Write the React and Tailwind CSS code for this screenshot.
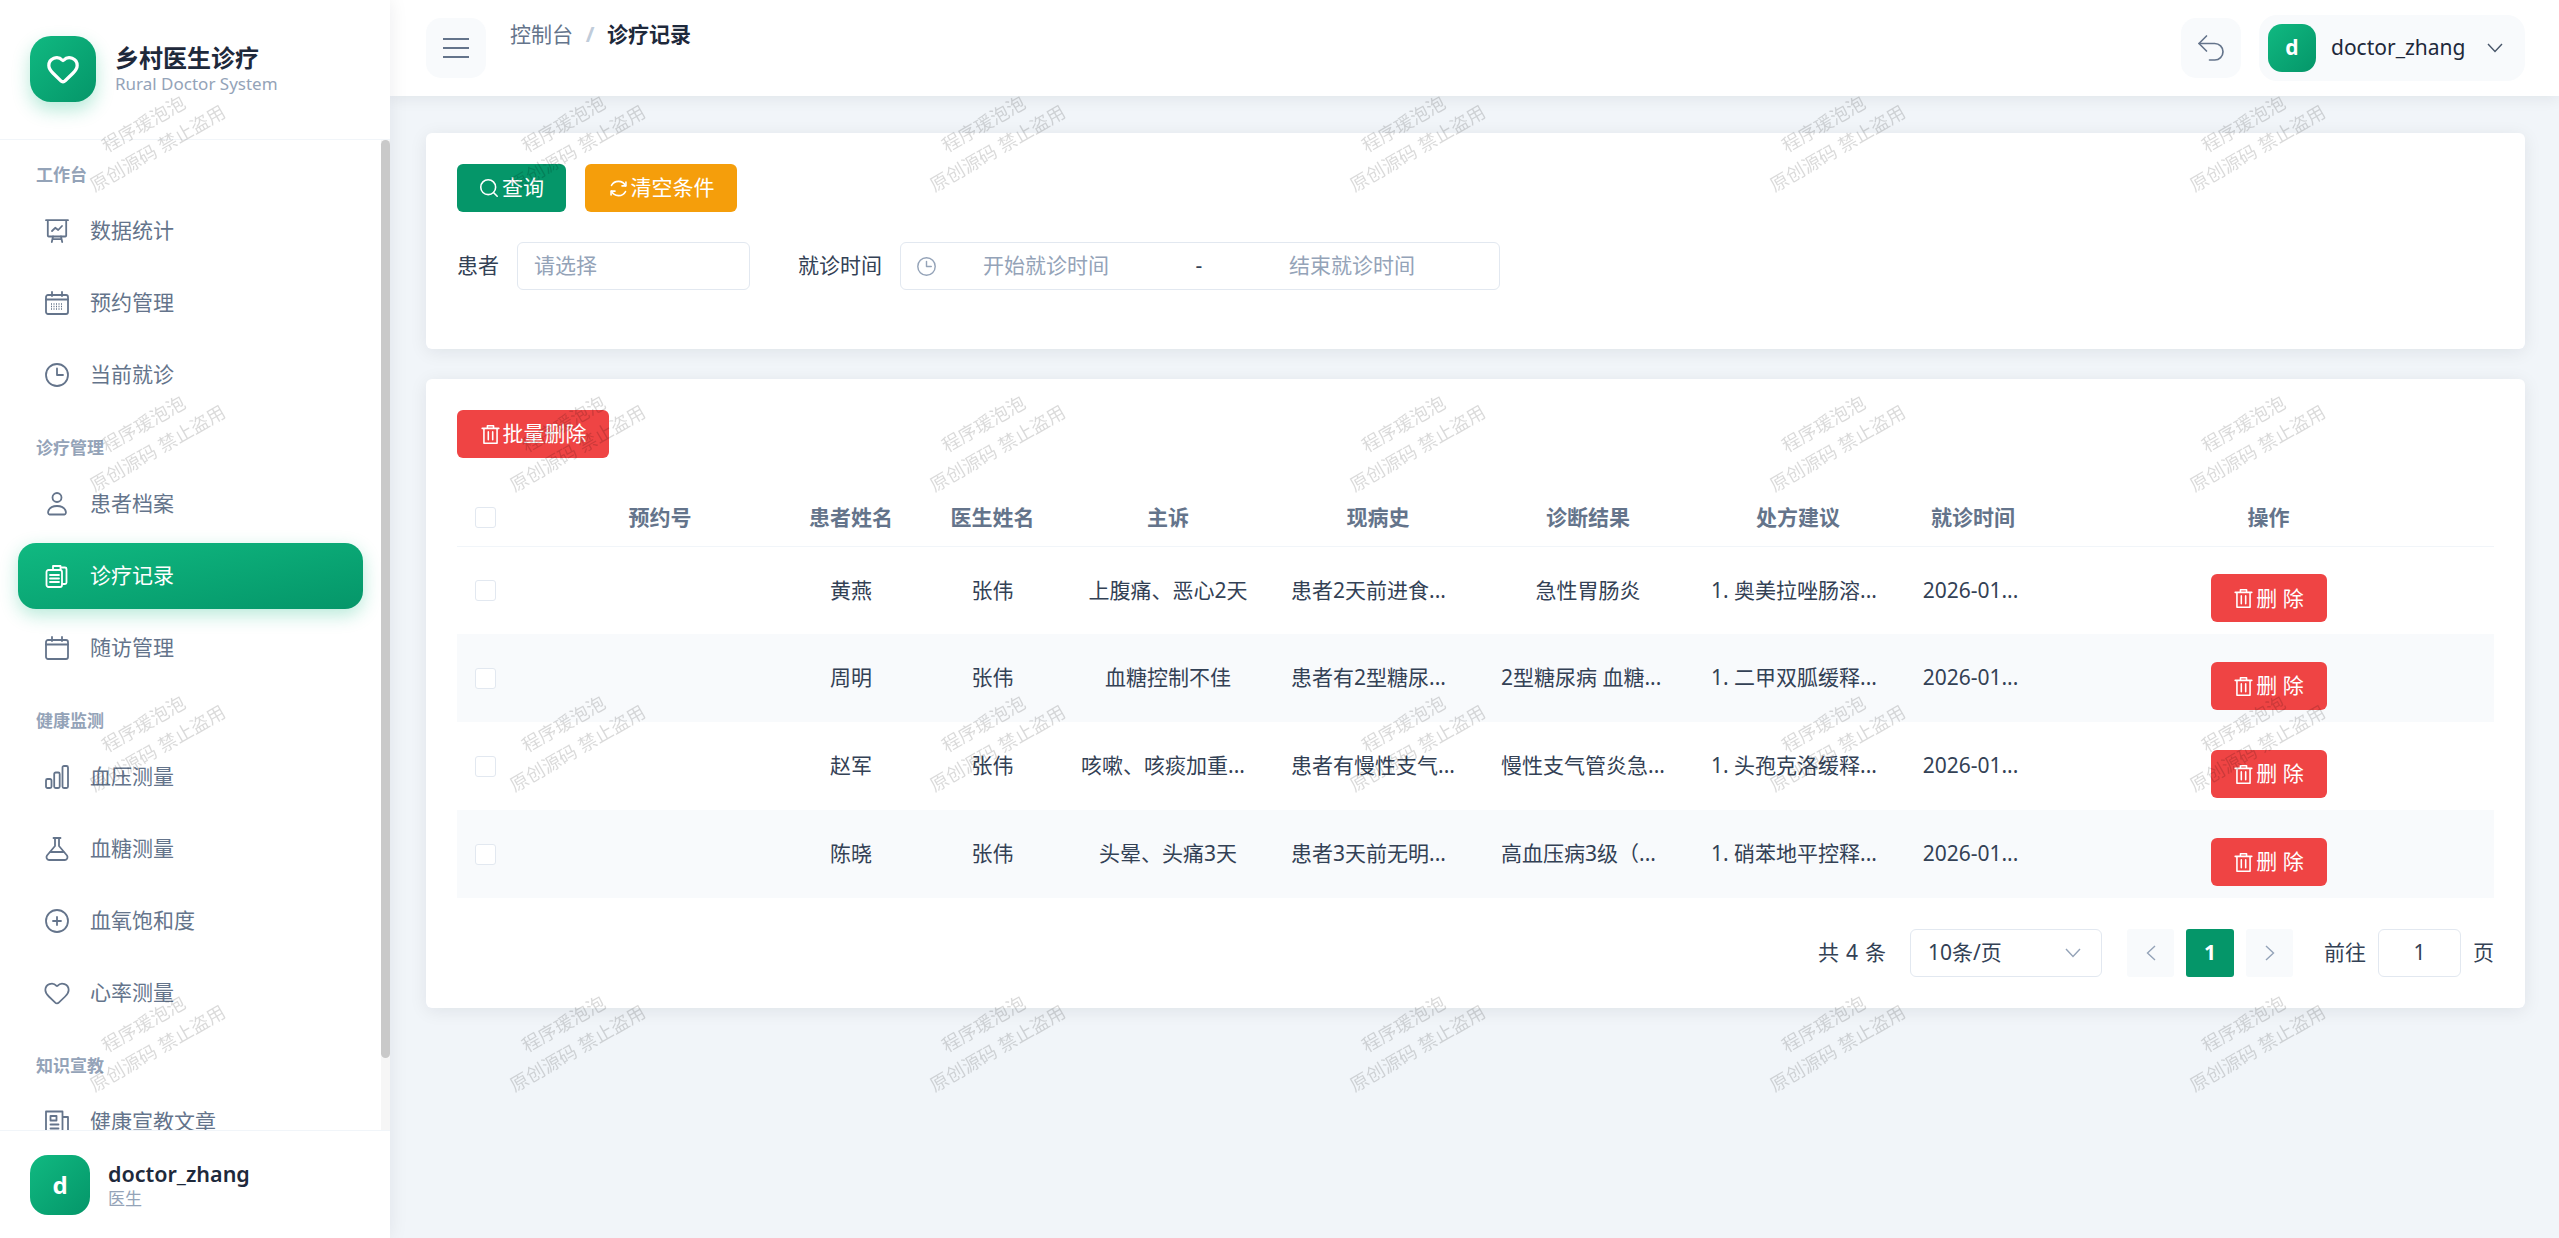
import { Undo2, Heart } from 'lucide-react';

const Icon = ({ children, size = 24, className = '' }) => (
  <svg width={size} height={size} viewBox="0 0 24 24" fill="none" stroke="currentColor" strokeWidth="1.8" strokeLinecap="round" strokeLinejoin="round" className={`shrink-0 ${className}`}>
    {children}
  </svg>
);

const BoardIcon = () => (
  <Icon>
    <path d="M1 1.200h22M2.800 1.200v15.300a1 1 0 0 0 1 1h16.400a1 1 0 0 0 1-1V1.200" />
    <path d="M7 12l3.200-3.200 3 2.200L17 7" />
    <path d="M8 17.500 6.800 23M16 17.500l1.200 5.500M7.500 20.200h9" />
  </Icon>
);

const CalendarDotsIcon = () => (
  <Icon>
    <rect x="1" y="4" width="22" height="19" rx="2" />
    <path d="M7 1V5M17 1V5M1 8.500h22" />
    <path d="M6 13h12M6 15.500h12M6 18h12" strokeDasharray="1 1.500" strokeLinecap="butt" strokeWidth="1.300" />
  </Icon>
);

const ClockIcon = ({ size = 24 }) => (
  <Icon size={size}>
    <circle cx="12" cy="12" r="11" />
    <path d="M12 5.500V12h6" />
  </Icon>
);

const UserIcon = () => (
  <Icon>
    <circle cx="12" cy="5.500" r="4.500" />
    <path d="M4.500 22.500C1.800 22.500 2.400 14 12 14s10.200 8.500 7.500 8.500z" />
  </Icon>
);

const ClipboardIcon = () => (
  <Icon>
    <rect x="1.500" y="6" width="15.500" height="17" rx="2" />
    <path d="M8 6V2h7.500v4M15.500 3.500H20a1.500 1.500 0 0 1 1.500 1.500v13.500A1.500 1.500 0 0 1 20 20h-3" />
    <path d="M5 11h9M5 14.500h9M5 18h9" />
  </Icon>
);

const CalendarIcon = () => (
  <Icon>
    <rect x="1" y="4" width="22" height="19" rx="2" />
    <path d="M7 1V5M17 1V5M1 8.500h22" />
  </Icon>
);

const BarsIcon = () => (
  <Icon>
    <rect x="1" y="14" width="5.500" height="9" rx="1.500" />
    <rect x="9.200" y="7.500" width="5.500" height="15.500" rx="1.500" />
    <rect x="17.500" y="1" width="5.500" height="22" rx="1.500" />
  </Icon>
);

const FlaskIcon = () => (
  <Icon>
    <path d="M8.500 1h7M10 1V9L2 18.500c-1 1.500-.5 4.500 2 4.500h16c2.500 0 3-3 2-4.500L14 9V1" />
    <path d="M5.500 15h13" />
  </Icon>
);

const PlusCircleIcon = () => (
  <Icon>
    <circle cx="12" cy="12" r="11" />
    <path d="M12 8v8M8 12h8" />
  </Icon>
);

const NewsIcon = () => (
  <Icon>
    <path d="M1 23V1.500h16.500V23M17.500 7H23v16" />
    <rect x="5.500" y="6" width="6" height="4.500" />
    <path d="M5.500 14.500h8M5.500 18.500h8" />
  </Icon>
);

const SearchIcon = () => (
  <Icon size={21}>
    <circle cx="10.500" cy="10.500" r="8.500" />
    <path d="m16.800 16.800 4 4" />
  </Icon>
);

const RefreshIcon = () => (
  <Icon size={21}>
    <path d="M4 8.500A9 9 0 0 1 20 9M20 15.500A9 9 0 0 1 4 15" />
    <path d="M20.500 4.500V9H16M3.500 19.500V15H8" />
  </Icon>
);

const TrashIcon = () => (
  <Icon size={21}>
    <path d="M2.500 5h19M8.500 5V2h7v3M4.500 5v17h15V5M9.500 9v9M14.500 9v9" />
  </Icon>
);

const Chevron = ({ className = '' }) => (
  <svg width="16" height="10" viewBox="0 0 16 10" fill="none" stroke="currentColor" strokeWidth="1.400" className={className}>
    <path d="M1 1l7 7.500L15 1" />
  </svg>
);

const groups = [
  { title: '工作台', items: [['数据统计', BoardIcon], ['预约管理', CalendarDotsIcon], ['当前就诊', ClockIcon]] },
  { title: '诊疗管理', items: [['患者档案', UserIcon], ['诊疗记录', ClipboardIcon, true], ['随访管理', CalendarIcon]] },
  {
    title: '健康监测',
    items: [
      ['血压测量', BarsIcon],
      ['血糖测量', FlaskIcon],
      ['血氧饱和度', PlusCircleIcon],
      ['心率测量', () => <Heart size={28} strokeWidth={1.500} className="-mx-[2px] shrink-0" />],
    ],
  },
  { title: '知识宣教', items: [['健康宣教文章', NewsIcon]] },
];

const rows = [
  ['黄燕', '张伟', ['上腹痛、恶心2天'], ['患者2天前进食...', true], ['急性胃肠炎'], '1. 奥美拉唑肠溶...'],
  ['周明', '张伟', ['血糖控制不佳'], ['患者有2型糖尿...', true], ['2型糖尿病 血糖...', true], '1. 二甲双胍缓释...'],
  ['赵军', '张伟', ['咳嗽、咳痰加重...', true], ['患者有慢性支气...', true], ['慢性支气管炎急...', true], '1. 头孢克洛缓释...'],
  ['陈晓', '张伟', ['头晕、头痛3天'], ['患者3天前无明...', true], ['高血压病3级（...', true], '1. 硝苯地平控释...'],
];

const Cell = ({ value }) => (
  <td className="px-[18px] align-middle">
    <div className={`whitespace-nowrap ${value[1] ? 'text-left' : 'text-center'}`}>{value[0]}</div>
  </td>
);

const Sidebar = () => (
  <aside className="relative z-10 flex h-full w-[390px] shrink-0 flex-col bg-white shadow-[0_0_18px_rgba(15,23,42,0.08)]">
    <div className="flex h-[140px] shrink-0 items-center gap-[19px] border-b border-[#f1f5f9] pl-[30px] pb-[1px]">
      <div className="flex h-[66px] w-[66px] items-center justify-center rounded-[21px] bg-gradient-to-br from-[#10b981] to-[#059669] text-white shadow-[0_8px_18px_rgba(16,185,129,0.3)]">
        <Heart size={34} strokeWidth={2.300} />
      </div>
      <div>
        <div className="text-[24px] leading-[30px] font-bold text-[#1e293b]">乡村医生诊疗</div>
        <div className="text-[17px] leading-[22px] text-[#94a3b8]">Rural Doctor System</div>
      </div>
    </div>
    <div className="relative flex-1 overflow-hidden">
      <nav className="flex flex-col gap-[27px] pt-[22px] pl-[18px] pr-[27px]">
        {groups.map((group) => (
          <div key={group.title}>
            <div className="mb-[10px] h-[26px] pl-[18px] text-[17px] leading-[26px] font-bold text-[#94a3b8]">{group.title}</div>
            <div className="flex flex-col gap-[6px]">
              {group.items.map(([label, ItemIcon, active]) => (
                <div
                  key={label}
                  className={`flex h-[66px] items-center gap-[21px] rounded-[18px] pl-[27px] text-[21px] ${
                    active
                      ? 'bg-gradient-to-br from-[#10b981] to-[#059669] text-white shadow-[0_6px_18px_rgba(16,185,129,0.3)]'
                      : 'text-[#64748b]'
                  }`}
                >
                  <ItemIcon />
                  {label}
                </div>
              ))}
            </div>
          </div>
        ))}
      </nav>
      {/* scrollbar */}
      <div className="absolute top-0 right-0 bottom-0 w-[9px] bg-[#f6f6f6]">
        <div className="h-[918px] rounded-[5px] bg-[#c9c9c9]" />
      </div>
    </div>
    <div className="relative flex h-[108px] shrink-0 items-center gap-[18px] border-t border-[#f1f5f9] bg-white pl-[30px]">
      <div className="flex h-[60px] w-[60px] items-center justify-center rounded-[18px] bg-gradient-to-br from-[#10b981] to-[#059669] text-[24px] font-bold text-white">d</div>
      <div>
        <div className="text-[21.500px] leading-[28px] font-semibold text-[#1e293b]">doctor_zhang</div>
        <div className="text-[17px] leading-[22px] text-[#94a3b8]">医生</div>
      </div>
    </div>
  </aside>
);

const Header = () => (
  <header className="relative flex h-[96px] shrink-0 items-center justify-between bg-white pl-[36px] pr-[34px] shadow-[0_3px_14px_rgba(15,23,42,0.07)]">
    <div className="flex h-full items-center gap-[24px]">
      <button type="button" className="flex h-[60px] w-[60px] flex-col items-center justify-center gap-[7px] rounded-[15px] bg-[#f8fafc]">
        <span className="h-[2px] w-[26px] bg-[#64748b]" />
        <span className="h-[2px] w-[26px] bg-[#64748b]" />
        <span className="h-[2px] w-[26px] bg-[#64748b]" />
      </button>
      <div className="flex items-center self-start pt-[22px] text-[21px] leading-[24px]">
        <span className="text-[#64748b]">控制台</span>
        <span className="w-[34px] text-center font-bold text-[#c0ccda]">/</span>
        <span className="font-bold text-[#1e293b]">诊疗记录</span>
      </div>
    </div>
    <div className="flex items-center gap-[18px]">
      <button type="button" className="flex h-[60px] w-[60px] items-center justify-center rounded-[15px] bg-[#f8fafc] text-[#64748b]">
        <Undo2 size={36} strokeWidth={1.100} />
      </button>
      <div className="flex h-[66px] w-[266px] items-center rounded-[18px] bg-[#f8fafc] pl-[9px]">
        <div className="flex h-[48px] w-[48px] items-center justify-center rounded-[14px] bg-gradient-to-br from-[#10b981] to-[#059669] text-[21px] font-bold text-white">d</div>
        <span className="ml-[15px] text-[21px] text-[#1e293b]">doctor_zhang</span>
        <Chevron className="ml-[21px] text-[#475569]" />
      </div>
    </div>
  </header>
);

const ActionButton = ({ icon, label, className, spacing = 'w-[152px]' }) => (
  <button type="button" className={`flex h-[48px] items-center justify-center gap-[2px] rounded-[6px] text-[21px] text-white ${spacing} ${className}`}>
    {icon}
    {label}
  </button>
);

const SearchCard = () => (
  <section className="rounded-[6px] bg-white px-[31px] pt-[31px] pb-[59px] shadow-[0_3px_18px_rgba(15,23,42,0.08)]">
    <div className="flex gap-[19px]">
      <ActionButton icon={<SearchIcon />} label="查询" className="bg-[#059669]" spacing="w-[109px]" />
      <ActionButton icon={<RefreshIcon />} label="清空条件" className="bg-[#f59e0b]" />
    </div>
    <div className="mt-[30px] flex items-center text-[21px] text-[#334155]">
      <span className="w-[60px]">患者</span>
      <div className="flex h-[48px] w-[233px] items-center rounded-[6px] border border-[#e2e8f0] pl-[16px] text-[#94a3b8]">请选择</div>
      <span className="ml-[48px] w-[102px]">就诊时间</span>
      <div className="flex h-[48px] w-[600px] items-center rounded-[6px] border border-[#e2e8f0] pl-[16px] text-[#94a3b8]">
        <ClockIcon size={19} />
        <span className="ml-[9px] w-[202px] text-center">开始就诊时间</span>
        <span className="w-[104px] text-center text-[#334155]">-</span>
        <span className="w-[202px] text-center">结束就诊时间</span>
      </div>
    </div>
  </section>
);

const Checkbox = () => <div className="h-[21px] w-[21px] rounded-[3px] border border-[#e2e8f0] bg-white" />;

const RecordTable = () => (
  <table className="mt-[31px] w-full table-fixed border-collapse text-[21px] text-[#334155]">
    <colgroup>
      <col className="w-[83px]" />
      <col className="w-[240px]" />
      <col className="w-[142px]" />
      <col className="w-[141px]" />
      <col className="w-[210px]" />
      <col className="w-[210px]" />
      <col className="w-[210px]" />
      <col className="w-[210px]" />
      <col className="w-[140px]" />
      <col />
    </colgroup>
    <thead>
      <tr className="h-[57px] border-b border-[#f1f5f9] font-bold text-[#64748b]">
        <th className="pl-[18px]"><Checkbox /></th>
        {['预约号', '患者姓名', '医生姓名', '主诉', '现病史', '诊断结果', '处方建议', '就诊时间', '操作'].map((title) => (
          <th key={title} className="font-bold">{title}</th>
        ))}
      </tr>
    </thead>
    <tbody>
      {rows.map((row, index) => (
        <tr key={row[0]} className={`h-[88px] ${index % 2 === 1 ? 'bg-[#f8fafc]' : ''}`}>
          <td className="pl-[18px]"><Checkbox /></td>
          <td />
          <td className="text-center">{row[0]}</td>
          <td className="text-center">{row[1]}</td>
          <Cell value={row[2]} />
          <Cell value={row[3]} />
          <Cell value={row[4]} />
          <Cell value={[row[5], true]} />
          <td className="pr-[5px] text-center whitespace-nowrap">2026-01...</td>
          <td className="pt-[16px]">
            <button type="button" className="mx-auto flex h-[48px] w-[116px] items-center justify-center gap-[2px] rounded-[6px] bg-[#ef4444] text-white">
              <TrashIcon />
              删 除
            </button>
          </td>
        </tr>
      ))}
    </tbody>
  </table>
);

const Pagination = () => (
  <div className="mt-[31px] flex items-center justify-end text-[21px] text-[#334155]">
    <span className="[word-spacing:1.500px]">共 4 条</span>
    <div className="ml-[24px] flex h-[48px] w-[192px] items-center justify-between rounded-[6px] border border-[#e2e8f0] pr-[20px] pl-[17px]">
      10条/页
      <Chevron className="text-[#94a3b8]" />
    </div>
    <button type="button" className="ml-[25px] flex h-[48px] w-[47px] items-center justify-center rounded-[3px] bg-[#f8fafc] text-[#94a3b8]">
      <Chevron className="rotate-90" />
    </button>
    <div className="ml-[12px] flex h-[48px] w-[48px] items-center justify-center rounded-[3px] bg-[#059669] font-bold text-white">1</div>
    <button type="button" className="ml-[12px] flex h-[48px] w-[47px] items-center justify-center rounded-[3px] bg-[#f8fafc] text-[#94a3b8]">
      <Chevron className="-rotate-90" />
    </button>
    <span className="ml-[31px]">前往</span>
    <div className="ml-[12px] flex h-[48px] w-[83px] items-center justify-center rounded-[6px] border border-[#e2e8f0]">1</div>
    <span className="ml-[12px]">页</span>
  </div>
);

const Watermark = () => (
  <div className="pointer-events-none fixed inset-0 z-20 overflow-hidden">
    <div className="-mt-[14px] -ml-[60px] grid grid-cols-[repeat(7,420px)] auto-rows-[300px]">
      {Array.from({ length: 35 }, (_, i) => (
        <div key={i} className="flex items-center justify-center">
          <div className="-rotate-[30deg] text-center text-[18.500px] leading-[28px] whitespace-nowrap text-black/15">
            <div>程序瑗泡泡</div>
            <div>原创源码 禁止盗用</div>
          </div>
        </div>
      ))}
    </div>
  </div>
);

export default function App() {
  return (
    <div className="flex h-screen overflow-hidden bg-[#f1f5f9] font-['Noto_Sans','Noto_Sans_CJK_SC',sans-serif]">
      <Sidebar />
      <div className="flex min-w-0 flex-1 flex-col">
        <Header />
        <main className="flex flex-col gap-[30px] pt-[37px] pr-[34px] pl-[36px]">
          <SearchCard />
          <section className="rounded-[6px] bg-white p-[31px] shadow-[0_3px_18px_rgba(15,23,42,0.08)]">
            <ActionButton icon={<TrashIcon />} label="批量删除" className="bg-[#ef4444]" />
            <RecordTable />
            <Pagination />
          </section>
        </main>
      </div>
      <Watermark />
    </div>
  );
}
